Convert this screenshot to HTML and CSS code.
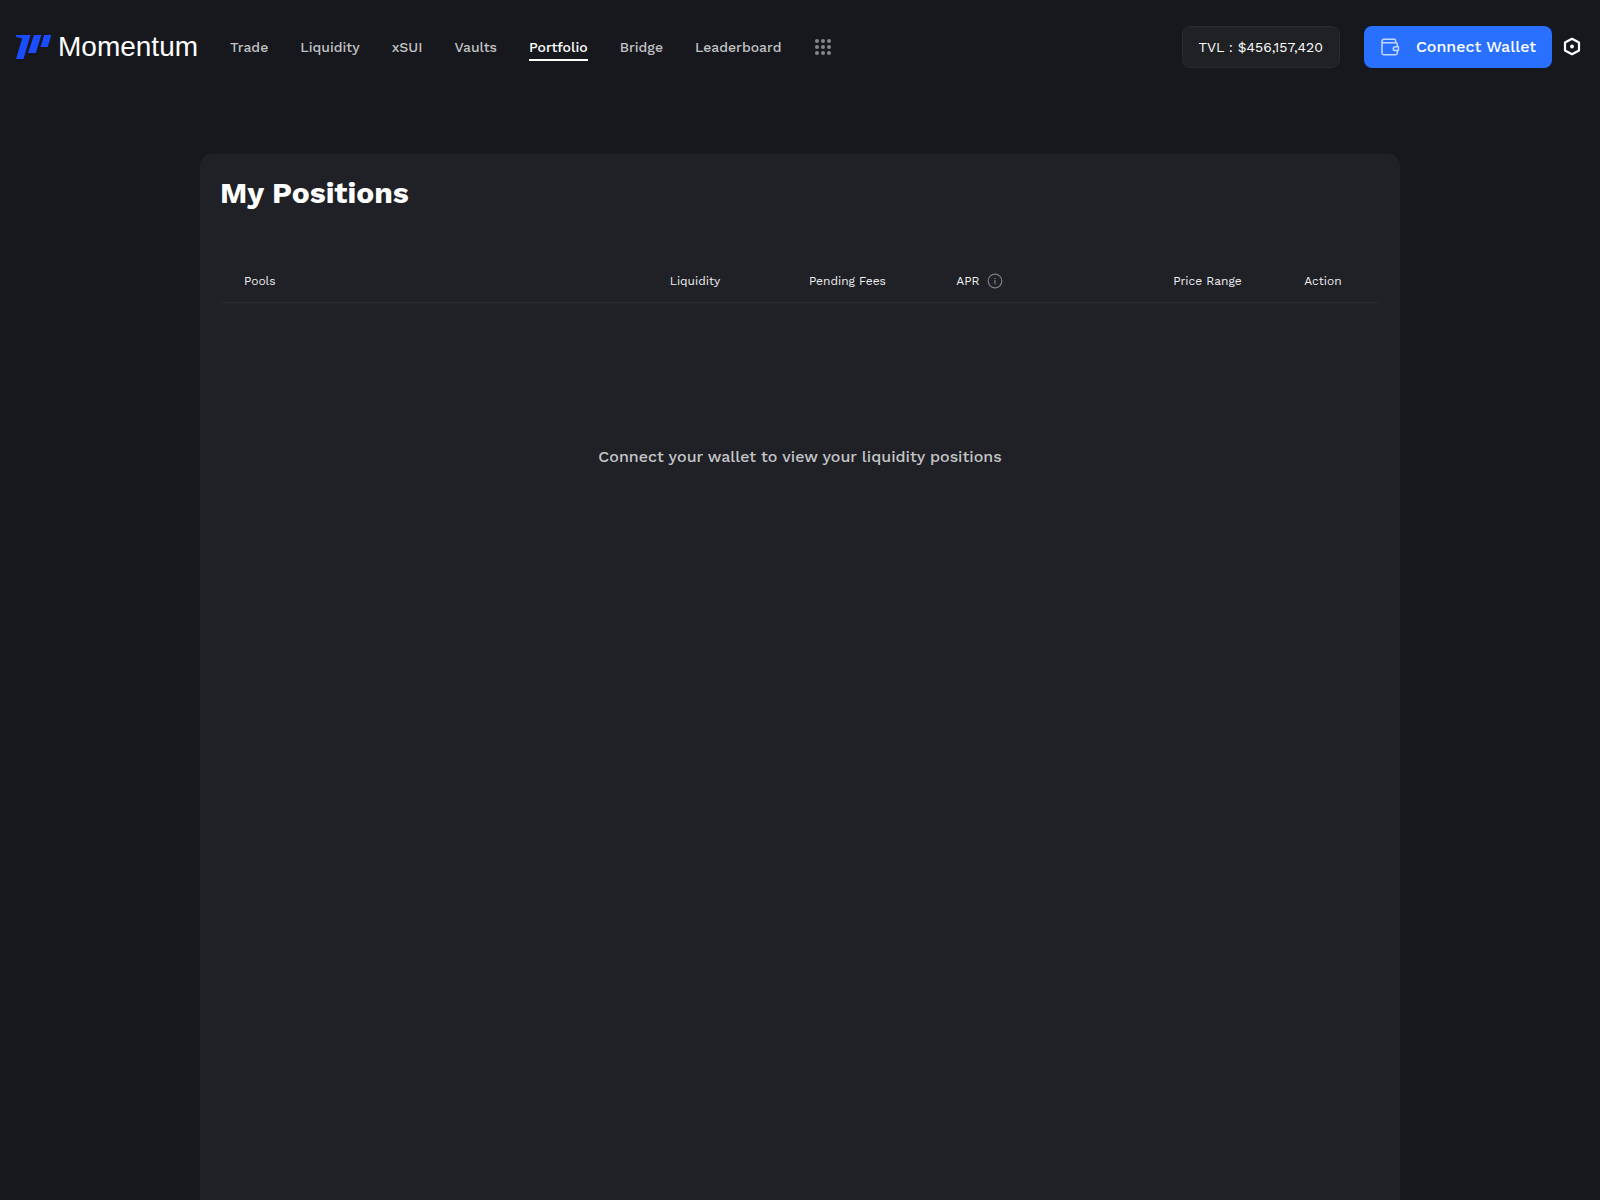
FILE: index.html
```html
<!DOCTYPE html>
<html lang="en">
<head>
<meta charset="utf-8">
<meta name="viewport" content="width=device-width, initial-scale=1">
<title>Momentum</title>
<link rel="stylesheet" href="styles.css">
</head>
<body>
<header class="header">
  <a class="logo" href="#">
    <svg width="36" height="24" viewBox="0 0 36 24" fill="#1a4dff" aria-hidden="true">
      <path d="M0 0H14.500L7.500 24H0L6.200 3.500Q4 2.500 0 2Z"/>
      <path d="M18 0H25.300L19.800 18H12Z"/>
      <path d="M28.200 0H35.300L31.700 12H24.500Z"/>
    </svg>
    <span class="logo-text">Momentum</span>
  </a>
  <nav class="nav">
    <a class="nav-link" href="#">Trade</a>
    <a class="nav-link" href="#">Liquidity</a>
    <a class="nav-link" href="#">xSUI</a>
    <a class="nav-link" href="#">Vaults</a>
    <a class="nav-link active" href="#">Portfolio</a>
    <a class="nav-link" href="#">Bridge</a>
    <a class="nav-link" href="#">Leaderboard</a>
    <button class="icon-button" type="button" aria-label="More">
      <svg width="20" height="20" viewBox="0 0 20 20" fill="#85868a">
        <circle cx="4" cy="4" r="2"/><circle cx="10" cy="4" r="2"/><circle cx="16" cy="4" r="2"/>
        <circle cx="4" cy="10" r="2"/><circle cx="10" cy="10" r="2"/><circle cx="16" cy="10" r="2"/>
        <circle cx="4" cy="16" r="2"/><circle cx="10" cy="16" r="2"/><circle cx="16" cy="16" r="2"/>
      </svg>
    </button>
  </nav>
  <div class="actions">
    <div class="tvl">TVL : $456,157,420</div>
    <div class="wallet">
      <button class="connect" type="button">
        <svg width="20" height="20" viewBox="0 0 20 20" fill="none" stroke="#c4d7ff" stroke-width="1.500" stroke-linejoin="round" aria-hidden="true">
          <path d="M17.300 9.500V7.500Q17.300 5.800 15.800 5.800H3.500Q2 5.800 2 4.200Q2 2.300 4 2.300H14Q15.700 2.300 15.700 4V5.800M2 4.200V16Q2 17.700 3.700 17.700H15.600Q17.300 17.700 17.300 16V13.800"/>
          <path d="M18.400 9.800H15.300Q13.300 9.800 13.300 11.700Q13.300 13.600 15.300 13.600H18.400Z"/>
        </svg>
        <span class="connect-label">Connect Wallet</span>
      </button>
      <button class="icon-button" type="button" aria-label="Settings">
        <svg width="20" height="20" viewBox="0 0 20 20" fill="none" stroke="#fff" stroke-width="2.200" stroke-linejoin="round">
          <path d="M10 1.800L17 5.500V13.500L10 17.200L3 13.500V5.500Z"/>
          <circle cx="10" cy="9.500" r="1.900" fill="#fff" stroke="none"/>
        </svg>
      </button>
    </div>
  </div>
</header>
<main class="card">
  <h1 class="title">My Positions</h1>
  <table class="positions">
    <colgroup>
      <col class="col-pools"><col class="col-liquidity"><col class="col-fees">
      <col class="col-apr"><col class="col-range"><col>
    </colgroup>
    <thead>
      <tr>
        <th scope="col">Pools</th>
        <th scope="col">Liquidity</th>
        <th scope="col">Pending Fees</th>
        <th scope="col">
          <span class="with-icon">APR
            <svg width="16" height="16" viewBox="0 0 16 16" fill="none" stroke="#7c7d80" aria-hidden="true">
              <circle cx="8" cy="8" r="6.800" stroke-width="1.200"/>
              <path d="M8 7V11.300M8 4.700V6" stroke-width="1.200"/>
            </svg>
          </span>
        </th>
        <th scope="col">Price Range</th>
        <th scope="col">Action</th>
      </tr>
    </thead>
    <tbody>
      <tr><td class="empty" colspan="6">Connect your wallet to view your liquidity positions</td></tr>
    </tbody>
  </table>
</main>
</body>
</html>
```

FILE: styles.css
```css
* { box-sizing: border-box; }

body {
  margin: 0;
  min-height: 100vh;
  display: flex;
  flex-direction: column;
  background: #17181d;
  color: #fff;
  font-family: "Work Sans", Inter, sans-serif;
  font-size: 14px;
}

button { font: inherit; color: inherit; border: 0; cursor: pointer; }
a { color: inherit; text-decoration: none; }
svg { display: block; flex: none; }

.header {
  display: flex;
  align-items: center;
  gap: 32px;
  padding: 26px 18px 26px 16px;
}

.logo { display: flex; align-items: center; gap: 6px; }
.logo-text {
  font-family: "Liberation Sans", Arial, sans-serif;
  font-size: 28px;
  line-height: 32px;
}

.nav { display: flex; align-items: center; gap: 32px; }
.nav-link {
  padding: 4px 0 2px;
  border-bottom: 2px solid transparent;
  line-height: 20px;
  font-weight: 500;
  color: #c1c2c4;
}
.nav-link.active { color: #fff; border-color: #fff; }

.icon-button { padding: 0; background: none; }

.actions { display: flex; align-items: center; gap: 24px; margin-left: auto; }
.tvl {
  height: 42px;
  padding: 0 16px;
  border: 1px solid #292a2d;
  border-radius: 8px;
  background: #202124;
  line-height: 40px;
}
.wallet { display: flex; align-items: center; gap: 10px; }
.connect {
  display: flex;
  align-items: center;
  gap: 16px;
  height: 42px;
  padding: 0 16px;
  border-radius: 8px;
  background: #2970ff;
  font-size: 16px;
  font-weight: 500;
}
.connect-label { padding-bottom: 2px; }

.card {
  flex: 1;
  width: 100%;
  max-width: 1200px;
  margin: 60px auto 0;
  padding: 20px;
  border-radius: 12px 12px 0 0;
  background: #202126;
}
.title { margin: 0 0 42px; font-size: 30px; line-height: 38px; font-weight: 700; }

.positions { width: 100%; border-collapse: collapse; table-layout: fixed; }
.col-pools { width: 36.700%; }
.col-liquidity { width: 12%; }
.col-fees { width: 12.700%; }
.col-apr { width: 18.700%; }
.col-range { width: 11.300%; }
.positions th {
  height: 48px;
  padding: 7px 0 0 24px;
  border-bottom: 1px solid #292a2f;
  text-align: left;
  font-size: 12px;
  font-weight: 400;
  white-space: nowrap;
  color: #f0f0f1;
}
.with-icon { display: flex; align-items: center; gap: 8px; }
.empty {
  padding: 144px 0;
  text-align: center;
  font-size: 16px;
  line-height: 20px;
  font-weight: 500;
  color: #c4c5c6;
}
```
